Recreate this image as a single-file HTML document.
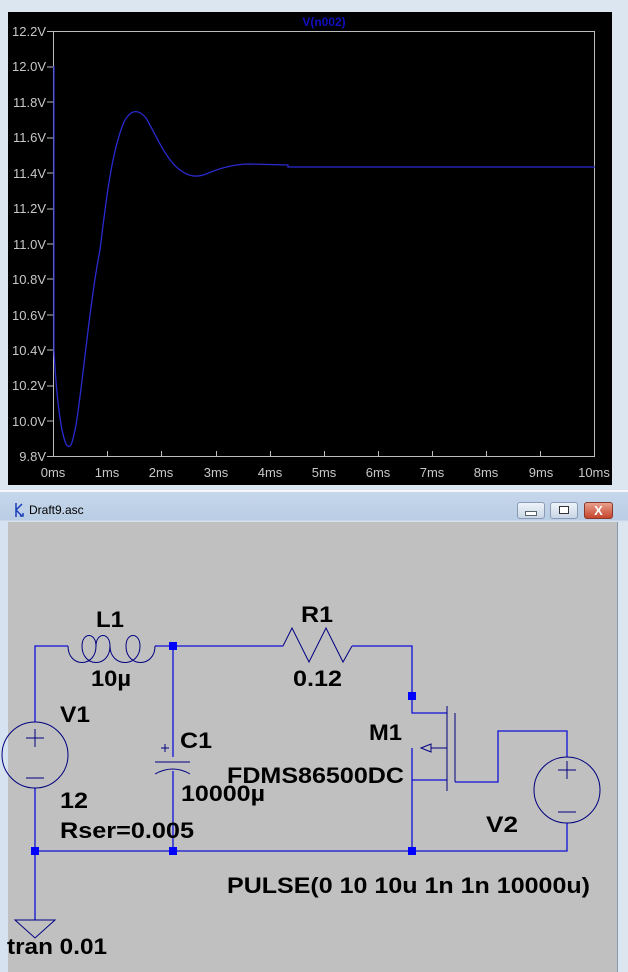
<!DOCTYPE html>
<html><head><style>
body{margin:0;width:628px;height:972px;overflow:hidden;background:#dde7f2;font-family:"Liberation Sans",sans-serif;position:relative}
.abs{position:absolute}
.btn{position:absolute;top:502px;width:26px;height:15px;border:1px solid #8a9bb3;border-radius:3px;background:linear-gradient(#eef3f9,#c9d6e6)}
</style></head><body>
<svg class="abs" style="left:0;top:0" width="628" height="490">
<rect x="0" y="0" width="628" height="490" fill="#dce6f1"/>
<rect x="8" y="12" width="604" height="473" fill="#000"/>
<rect x="53.5" y="31.5" width="541" height="425" fill="none" stroke="#bcbcbc" stroke-width="1"/>
<g font-family="Liberation Sans" font-size="13" fill="#c8c8c8" text-anchor="end">
<text x="46" y="36">12.2V</text><text x="46" y="71">12.0V</text><text x="46" y="107">11.8V</text><text x="46" y="142">11.6V</text><text x="46" y="178">11.4V</text><text x="46" y="213">11.2V</text><text x="46" y="249">11.0V</text><text x="46" y="284">10.8V</text><text x="46" y="320">10.6V</text><text x="46" y="355">10.4V</text><text x="46" y="390">10.2V</text><text x="46" y="426">10.0V</text><text x="46" y="461">9.8V</text>
</g>
<g stroke="#bcbcbc"><path d="M47 31.5h6M47 67h6M47 102h6M47 138h6M47 173h6M47 209h6M47 244h6M47 279h6M47 315h6M47 350h6M47 386h6M47 421h6M47 456.5h6"/>
<path d="M107.5 451v6M161.5 451v6M216.5 451v6M270.5 451v6M324.5 451v6M378.5 451v6M432.5 451v6M486.5 451v6M540.5 451v6"/></g>
<g font-family="Liberation Sans" font-size="13" fill="#c8c8c8" text-anchor="middle">
<text x="53" y="477">0ms</text><text x="107" y="477">1ms</text><text x="161" y="477">2ms</text><text x="216" y="477">3ms</text><text x="270" y="477">4ms</text><text x="324" y="477">5ms</text><text x="378" y="477">6ms</text><text x="432" y="477">7ms</text><text x="486" y="477">8ms</text><text x="541" y="477">9ms</text><text x="594" y="477">10ms</text>
</g>
<text x="324" y="26" font-family="Liberation Sans" font-size="12" font-weight="bold" fill="#1010c0" text-anchor="middle">V(n002)</text>
<path d="M54 66 L54 350 C56 390 60 430 66 444 C70 450 72 446 76 425 C82 390 90 300 100 250 C106 200 112 150 124 122 C130 110 138 108 146 118 C156 135 166 160 180 170 C188 176 196 178 206 174 C220 168 236 164 250 164 L288 165 L288 167 L595 167" fill="none" stroke="#2a2ad0" stroke-width="1.3"/>
</svg>
<div class="abs" style="left:0;top:490px;width:628px;height:482px;background:linear-gradient(#c7d8ec,#b9cde4 30px,#d6e2ef 31px)"></div>
<div class="abs" style="left:0;top:490px;width:628px;height:2px;background:#f4f7fb"></div>
<svg class="abs" style="left:8px;top:501px" width="20" height="18"><path d="M8 2v14M8 9L14 3M8 9l6 6M12 15h3v-3" stroke="#1a3dbb" stroke-width="1.5" fill="none"/></svg>
<div class="abs" style="left:29px;top:503px;font-size:12px;color:#000">Draft9.asc</div>
<div class="btn" style="left:517px"><div style="margin:8px auto 0;width:10px;height:3px;background:#fff;border:1px solid #566"></div></div>
<div class="btn" style="left:550px"><div style="margin:3px auto 0;width:8px;height:6px;border:1px solid #333;background:#fff"></div></div>
<div class="btn" style="left:584px;width:27px;background:linear-gradient(#e9a08e,#c5452c);border-color:#8a3a2a;color:#fff;font-weight:bold;font-size:13px;text-align:center;line-height:15px">X</div>
<div class="abs" style="left:8px;top:522px;width:614px;height:450px;background:#c0c0c0"></div>
<div class="abs" style="left:617px;top:522px;width:11px;height:450px;background:#dbe6f1;border-left:1px solid #8898ad"></div>
<svg class="abs" style="left:0;top:0" width="628" height="972">
<g stroke="#1010d8" stroke-width="1.3" fill="none">
<path d="M35 722V646H68M155 646H283M352 646H412V713H447M412 780H447M412 748V851M455 782H498V731H567V757M567 823V851H35M35 788V920M173 646V757M173 771V851"/>
</g>
<g stroke="#000080" stroke-width="1" fill="none">
<path d="M68 646 C68 668 96 668 96 646 C96 632 82 632 82 646 C82 668 110 668 110 646 C110 632 96 632 96 646 M110 646 C110 668 140 668 140 646 C140 632 126 632 126 646 C126 668 155 668 155 646"/>
<path d="M283 646 L292 628 L309 662 L326 628 L343 662 L352 646"/>
<circle cx="35" cy="755" r="33"/><path d="M26 738h18M35 729v18M26 778h18"/>
<circle cx="567" cy="790" r="33"/><path d="M558 770h18M567 761v18M558 812h18"/>
<path d="M155 762H190M155 774 Q173 764 190 774M161 748h8M165 744v8"/>
<path d="M447 706V791M455 713V782M421 748l10-4v8zM431 748h16"/>
<path d="M15 920H55L35 938Z"/>
</g>
<g fill="#0000ff"><rect x="169" y="642" width="8" height="8"/><rect x="408" y="692" width="8" height="8"/><rect x="31" y="847" width="8" height="8"/><rect x="169" y="847" width="8" height="8"/><rect x="408" y="847" width="8" height="8"/></g>
<g font-family="Liberation Sans" font-weight="bold" font-size="22" fill="#000" lengthAdjust="spacingAndGlyphs">
<text x="96" y="627" textLength="28" lengthAdjust="spacingAndGlyphs">L1</text>
<text x="91" y="686" textLength="40" lengthAdjust="spacingAndGlyphs">10µ</text>
<text x="301" y="622" textLength="32" lengthAdjust="spacingAndGlyphs">R1</text>
<text x="293" y="686" textLength="49" lengthAdjust="spacingAndGlyphs">0.12</text>
<text x="60" y="722" textLength="30" lengthAdjust="spacingAndGlyphs">V1</text>
<text x="180" y="748" textLength="32" lengthAdjust="spacingAndGlyphs">C1</text>
<text x="369" y="740" textLength="33" lengthAdjust="spacingAndGlyphs">M1</text>
<text x="227" y="783" textLength="177" lengthAdjust="spacingAndGlyphs">FDMS86500DC</text>
<text x="181" y="801" textLength="84" lengthAdjust="spacingAndGlyphs">10000µ</text>
<text x="60" y="808" textLength="28" lengthAdjust="spacingAndGlyphs">12</text>
<text x="60" y="838" textLength="134" lengthAdjust="spacingAndGlyphs">Rser=0.005</text>
<text x="486" y="832" textLength="32" lengthAdjust="spacingAndGlyphs">V2</text>
<text x="227" y="893" textLength="363" lengthAdjust="spacingAndGlyphs">PULSE(0 10 10u 1n 1n 10000u)</text>
<text x="7" y="954" textLength="100" lengthAdjust="spacingAndGlyphs">tran 0.01</text>
</g>
</svg>
</body></html>
